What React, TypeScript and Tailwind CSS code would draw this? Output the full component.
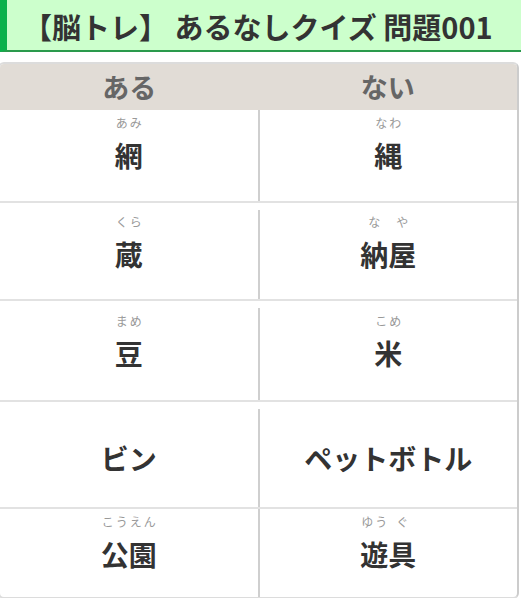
import React from "react";

type Part = { base: string; ruby?: string };

type Row = {
	left: Part[];
	right: Part[];
	height: string;
	pad: string;
	gap: boolean;
};

const rows: Row[] = [
	{
		left: [{ base: "網", ruby: "あみ" }],
		right: [{ base: "縄", ruby: "なわ" }],
		height: "h-[93px]",
		pad: "pt-[5px]",
		gap: false,
	},
	{
		left: [{ base: "蔵", ruby: "くら" }],
		right: [
			{ base: "納", ruby: "な" },
			{ base: "屋", ruby: "や" },
		],
		height: "h-[98px]",
		pad: "pt-[11px]",
		gap: true,
	},
	{
		left: [{ base: "豆", ruby: "まめ" }],
		right: [{ base: "米", ruby: "こめ" }],
		height: "h-[101px]",
		pad: "pt-[12px]",
		gap: true,
	},
	{
		left: [{ base: "ビン" }],
		right: [{ base: "ペットボトル" }],
		height: "h-[107px]",
		pad: "pt-[38px]",
		gap: true,
	},
	{
		left: [
			{ base: "公", ruby: "こう" },
			{ base: "園", ruby: "えん" },
		],
		right: [
			{ base: "遊", ruby: "ゆう" },
			{ base: "具", ruby: "ぐ" },
		],
		height: "h-[88px]",
		pad: "pt-[5px]",
		gap: false,
	},
];

const Word = ({ parts }: { parts: Part[] }) => {
	const hasRuby = parts.some((p) => p.ruby);
	return (
		<div className="flex justify-center">
			{parts.map((p, i) => (
				<div key={i} className="flex flex-col items-stretch">
					{hasRuby && (
						<div className="flex justify-around h-[16px] leading-[16px] text-[12px] font-normal text-[#999] mb-[6px] whitespace-nowrap">
							{(p.ruby ?? "").split("").map((c, j) => (
								<span key={j}>{c}</span>
							))}
						</div>
					)}
					<div className="text-[28px] leading-[36px] font-bold text-[#333] text-center">
						{p.base}
					</div>
				</div>
			))}
		</div>
	);
};

const QuizRow = ({ row, last }: { row: Row; last: boolean }) => (
	<div
		className={`grid grid-cols-[1fr_2px_1fr] ${row.height} ${
			last ? "" : "border-b-2 border-[#e2e2e2]"
		}`}
	>
		<div className={row.pad}>
			<Word parts={row.left} />
		</div>
		<div className={`bg-[#cfcfcf] ${row.gap ? "mt-[7px]" : ""}`} />
		<div className={row.pad}>
			<Word parts={row.right} />
		</div>
	</div>
);

export default function App() {
	return (
		<div
			className="w-[521px] h-[598px] overflow-hidden bg-white"
			style={{ fontFamily: '"Noto Sans CJK JP", "Noto Sans", sans-serif' }}
		>
			<div className="h-[52px] bg-[#ccffcc] border-l-[7px] border-b-2 border-l-[#0bb14b] border-b-[#2a9a4c] flex items-center pl-[16px] pt-[3px]">
				<h1 className="text-[29px] leading-none font-bold text-[#333] whitespace-nowrap">
					【脳トレ】 あるなしクイズ 問題001
				</h1>
			</div>
			<div className="mt-[10px] -ml-[2px] mr-[2px] border-2 border-[#dcdcdc] border-r-[#cccccc] rounded-md overflow-hidden">
				<div className="grid grid-cols-2 h-[46px] bg-[#e1dcd6] text-[#666] text-[27px] font-bold">
					<div className="flex items-center justify-center">ある</div>
					<div className="flex items-center justify-center">ない</div>
				</div>
				{rows.map((r, i) => (
					<QuizRow key={i} row={r} last={i === rows.length - 1} />
				))}
			</div>
		</div>
	);
}
